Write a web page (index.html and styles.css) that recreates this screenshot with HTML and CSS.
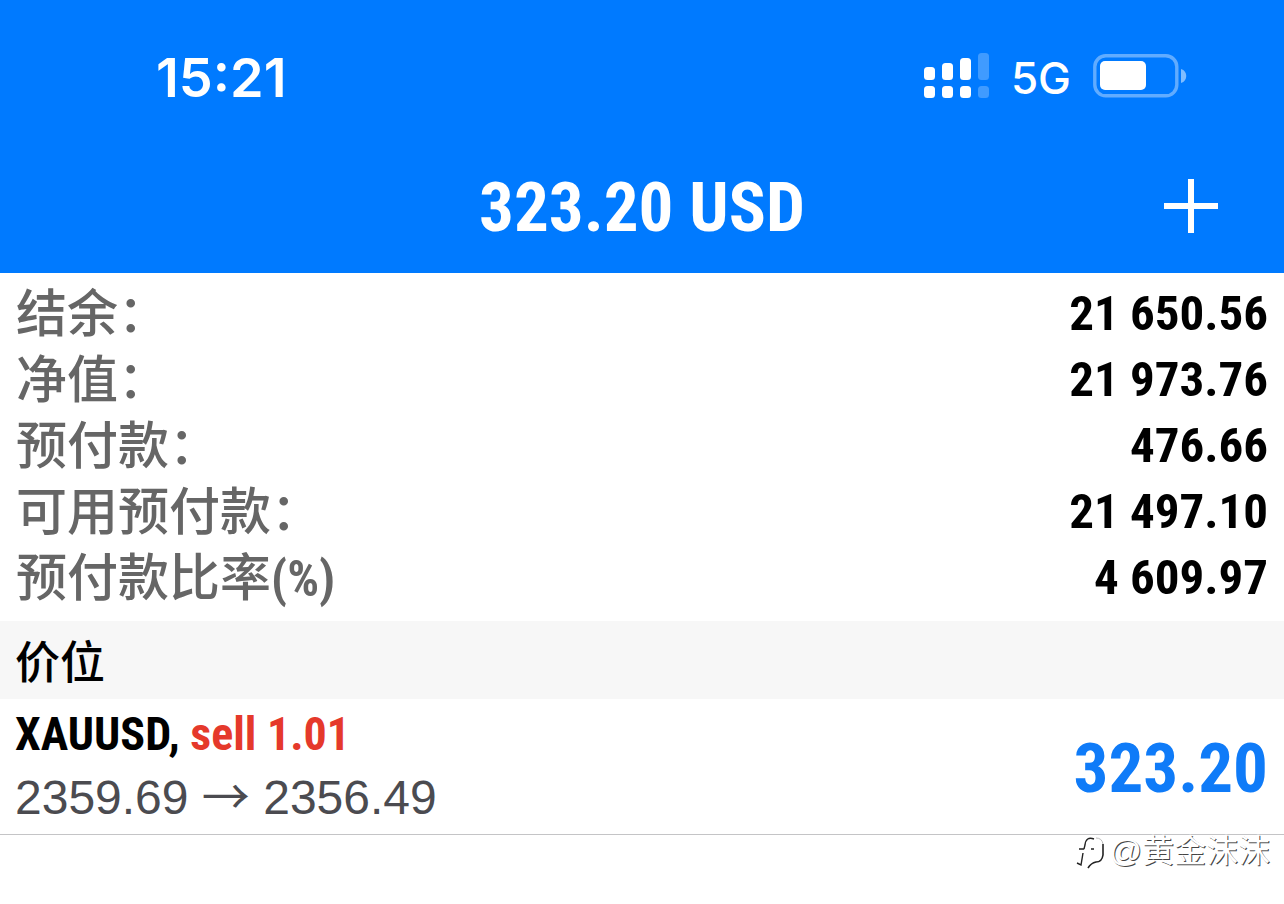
FILE: index.html
```html
<!DOCTYPE html>
<html lang="zh-CN">
<head>
<meta charset="utf-8">
<meta name="viewport" content="width=device-width, initial-scale=1">
<title>323.20 USD</title>
<link rel="stylesheet" href="styles.css">
</head>
<body>
<header class="header">
  <div class="status">
    <time class="clock">15:21</time>
    <div class="indicators">
      <svg class="signal" width="66" height="46" viewBox="0 0 66 46" fill="#fff" aria-hidden="true">
        <rect x="1" y="14" width="11" height="13" rx="3.5"/>
        <rect x="19" y="10" width="11" height="17" rx="3.5"/>
        <rect x="37" y="5" width="11" height="22" rx="3.5"/>
        <rect x="55" y="0" width="11" height="27" rx="3.5" opacity=".25"/>
        <rect x="1" y="33" width="11" height="12" rx="3.5"/>
        <rect x="19" y="33" width="11" height="12" rx="3.5"/>
        <rect x="37" y="33" width="11" height="12" rx="3.5"/>
        <rect x="55" y="33" width="11" height="12" rx="3.5" opacity=".25"/>
      </svg>
      <span class="network">5G</span>
      <svg class="battery" width="94" height="44" viewBox="0 0 94 44" aria-hidden="true">
        <rect x="1.8" y="1.8" width="82" height="40" rx="11" fill="none" stroke="#fff" stroke-opacity=".38" stroke-width="3.4"/>
        <rect x="7" y="7" width="46" height="29" rx="5" fill="#fff"/>
        <path d="M88 15c7 2 7 12 0 14z" fill="#fff" fill-opacity=".5"/>
      </svg>
    </div>
  </div>
  <div class="titlebar">
    <h1 class="title">323.20 USD</h1>
    <button class="add" type="button" aria-label="新建">
      <svg width="56" height="56" viewBox="0 0 56 56" aria-hidden="true"><path d="M28 1v54M1 28h54" stroke="#fff" stroke-width="6"/></svg>
    </button>
  </div>
</header>
<main>
  <dl class="summary">
    <div class="row"><dt>结余：</dt><dd>21 650.56</dd></div>
    <div class="row"><dt>净值：</dt><dd>21 973.76</dd></div>
    <div class="row"><dt>预付款：</dt><dd>476.66</dd></div>
    <div class="row"><dt>可用预付款：</dt><dd>21 497.10</dd></div>
    <div class="row"><dt>预付款比率<span class="unit">(%)</span></dt><dd>4 609.97</dd></div>
  </dl>
  <h2 class="section">价位</h2>
  <article class="position">
    <div class="details">
      <p class="symbol">XAUUSD, <span class="side">sell 1.01</span></p>
      <p class="prices">2359.69 <span class="arrow">→</span> 2356.49</p>
    </div>
    <p class="profit">323.20</p>
  </article>
</main>
<div class="watermark">
  <svg width="30" height="36" viewBox="0 0 30 36" fill="none" aria-hidden="true">
    <path d="M18 6q-8-3-9 6l-1 4M3 16h5M15 16h3M7 20l-2 12-4-2" stroke="#222" stroke-width="1.4"/>
    <path d="M27 11v11q-1 7-7 7-5 1-8 6" stroke="#222" stroke-width="1.6"/>
    <path d="M20 5q6 0 7 6" stroke="#bbb"/>
  </svg>
  <span>@黄金沫沫</span>
</div>
</body>
</html>
```
FILE: styles.css
```css
* { box-sizing: border-box; }
body {
  margin: 0;
  min-height: 100vh;
  position: relative;
  background: #fff;
  color: #000;
  font-family: "Roboto Condensed", "Liberation Sans", "Noto Sans CJK SC", sans-serif;
}
h1, h2, p, dl, dd { margin: 0; }
.header { background: #007aff; color: #fff; padding-top: 40px; }
.status {
  display: flex;
  justify-content: space-between;
  align-items: center;
  height: 72px;
  padding: 0 97px 0 156px;
  font-family: Inter, sans-serif;
}
.clock { font-size: 54px; font-weight: 600; line-height: 72px; padding-top: 3px; }
.indicators { display: flex; align-items: center; gap: 22px; }
.network { font-size: 44px; font-weight: 500; line-height: 72px; padding-top: 4px; }
.titlebar {
  display: grid;
  grid-template-columns: 56px 1fr 56px;
  align-items: center;
  padding: 44px 65px 17px;
}
.title { grid-column: 2; text-align: center; font-size: 69px; line-height: 96px; padding-top: 4px; }
.add { border: 0; padding: 0; background: none; width: 56px; height: 56px; cursor: pointer; }
.add svg { display: block; }
.summary { padding: 8px 16px 10px; }
.row {
  display: flex;
  justify-content: space-between;
  font-size: 49px;
  font-weight: 700;
  line-height: 66px;
}
.row dt {
  color: #666;
  font-size: 51px;
  font-weight: 500;
  line-height: 64px;
  padding-top: 2px;
}
.unit { font-size: 50px; font-weight: 700; }
.section {
  background: #f7f7f7;
  padding: 0 15px;
  font: 500 45px/78px "Noto Sans CJK SC", sans-serif;
}
.position {
  display: flex;
  justify-content: space-between;
  align-items: center;
  padding: 3px 16px 4px 15px;
  border-bottom: 1px solid #c4c4c6;
}
.symbol { font-size: 46px; font-weight: 700; line-height: 64px; }
.side { color: #e5392b; }
.prices { font: 48px/64px "Liberation Sans", sans-serif; color: #4b4b50; }
.arrow { font-family: "Noto Sans CJK SC", sans-serif; line-height: 1; }
.profit { color: #0f7bf8; font-size: 69px; font-weight: 700; line-height: 80px; padding-top: 6px; }
.watermark {
  position: absolute;
  top: 828px;
  right: 14px;
  display: flex;
  align-items: center;
  gap: 4px;
  color: #fff;
  font: 32px/46px "Liberation Sans", "Noto Sans CJK SC", sans-serif;
  text-shadow: 1px 1px 0 #444;
}
```
